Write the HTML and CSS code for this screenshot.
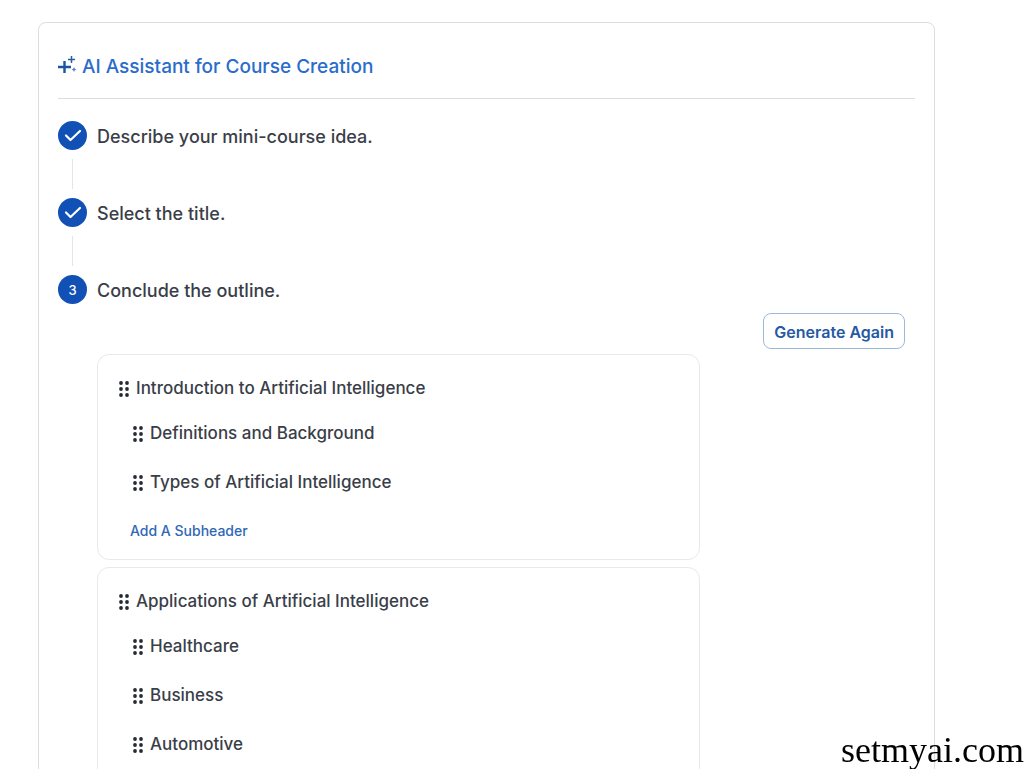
FILE: index.html
```html
<!DOCTYPE html>
<html lang="en">
<head>
<meta charset="utf-8">
<meta name="viewport" content="width=device-width, initial-scale=1">
<title>AI Assistant for Course Creation</title>
<link rel="stylesheet" href="styles.css">
</head>
<body>
<svg class="sprite" aria-hidden="true">
  <symbol id="grip" viewBox="0 0 12 18">
    <circle cx="3" cy="3" r="1.900"/><circle cx="9" cy="3" r="1.900"/>
    <circle cx="3" cy="9" r="1.900"/><circle cx="9" cy="9" r="1.900"/>
    <circle cx="3" cy="15" r="1.900"/><circle cx="9" cy="15" r="1.900"/>
  </symbol>
  <symbol id="check" viewBox="0 0 18 14">
    <path d="M2 6.500 6.500 11 16 2" fill="none" stroke="currentColor" stroke-width="2.2" stroke-linecap="round" stroke-linejoin="round"/>
  </symbol>
</svg>
<main class="page">
  <section class="panel">
    <header class="panel-header">
      <svg class="sparkle" viewBox="0 0 20 20" aria-hidden="true">
        <path d="M6.500 5v12M0 11h13" fill="none" stroke="#17559f" stroke-width="2.400"/>
        <path d="M13.500 0v7M10 3.500h7" fill="none" stroke="#2b5f94" stroke-width="1.500"/>
        <path d="M16 11l.8 1.700 1.700.8-1.700.8-.8 1.700-.8-1.700-1.700-.8 1.700-.8z" fill="#4a83c9"/>
      </svg>
      <h1 class="panel-title">AI Assistant for Course Creation</h1>
    </header>
    <ol class="steps">
      <li class="step">
        <div class="rail"><span class="marker"><svg class="check"><use href="#check"/></svg></span><span class="connector"></span></div>
        <h2 class="step-title">Describe your mini-course idea.</h2>
      </li>
      <li class="step">
        <div class="rail"><span class="marker"><svg class="check"><use href="#check"/></svg></span><span class="connector"></span></div>
        <h2 class="step-title">Select the title.</h2>
      </li>
      <li class="step">
        <div class="rail"><span class="marker">3</span></div>
        <div class="step-body">
          <h2 class="step-title">Conclude the outline.</h2>
          <div class="actions"><button class="generate" type="button">Generate Again</button></div>
          <div class="outline">
            <article class="group">
              <h3 class="row"><svg class="grip"><use href="#grip"/></svg>Introduction to Artificial Intelligence</h3>
              <ul class="topics">
                <li class="row"><svg class="grip"><use href="#grip"/></svg>Definitions and Background</li>
                <li class="row"><svg class="grip"><use href="#grip"/></svg>Types of Artificial Intelligence</li>
              </ul>
              <button class="add" type="button">Add A Subheader</button>
            </article>
            <article class="group">
              <h3 class="row"><svg class="grip"><use href="#grip"/></svg>Applications of Artificial Intelligence</h3>
              <ul class="topics">
                <li class="row"><svg class="grip"><use href="#grip"/></svg>Healthcare</li>
                <li class="row"><svg class="grip"><use href="#grip"/></svg>Business</li>
                <li class="row"><svg class="grip"><use href="#grip"/></svg>Automotive</li>
              </ul>
            </article>
          </div>
        </div>
      </li>
    </ol>
  </section>
</main>
<div class="watermark">setmyai.com</div>
</body>
</html>
```
FILE: styles.css
```css
* { box-sizing: border-box; }
body {
  margin: 0;
  background: #fff;
  color: #3a3e48;
  font-family: Inter, "Liberation Sans", sans-serif;
  font-weight: 500;
}
.sprite { position: absolute; width: 0; height: 0; }
.page { height: 100vh; overflow: hidden; padding: 22px 89px 0 38px; }
.panel { border: 1px solid #dcdde0; border-radius: 8px; padding: 20px 19px; }
.panel-header {
  display: flex;
  align-items: center;
  gap: 4px;
  height: 56px;
  padding-bottom: 7px;
  border-bottom: 1px solid #dcdde0;
}
.sparkle { width: 20px; height: 20px; margin-bottom: 2px; }
.panel-title { margin: 0; font-size: 19px; line-height: 28px; font-weight: 500; color: #2a6ccb; }
.steps { list-style: none; margin: 0; padding: 22px 0 0; }
.step { display: grid; grid-template-columns: 29px 1fr; column-gap: 10px; min-height: 77px; }
.rail { display: flex; flex-direction: column; align-items: center; gap: 9px; padding-bottom: 9px; }
.marker {
  display: flex;
  align-items: center;
  justify-content: center;
  width: 29px;
  height: 29px;
  border-radius: 50%;
  background: #1150b4;
  color: #fff;
  font-size: 13px;
}
.check { width: 18px; height: 14px; }
.connector { flex: 1; width: 1px; background: #e4e5e9; }
.step-title { margin: 0; font-size: 18px; line-height: 32px; font-weight: 500; }
.actions { display: flex; justify-content: flex-end; padding: 6px 10px 5px 0; }
.generate {
  height: 36px;
  padding: 2px 10px 0;
  border: 1px solid #9db9d8;
  border-radius: 8px;
  background: #fff;
  color: #2459a3;
  font: 600 16px/20px Inter, sans-serif;
}
.outline { display: flex; flex-direction: column; gap: 7px; max-width: 603px; }
.group { border: 1px solid #e8e9eb; border-radius: 12px; padding: 21px 20px 18px; }
.group:last-child { padding-bottom: 65px; }
.row {
  display: flex;
  align-items: center;
  gap: 6px;
  margin: 0;
  font-size: 17px;
  line-height: 24px;
  font-weight: 500;
}
.grip { width: 12px; height: 18px; margin-top: 2px; fill: #262a33; }
.topics { list-style: none; margin: 0; padding: 21px 0 0 14px; display: flex; flex-direction: column; gap: 25px; }
.add {
  margin: 27px 0 0 12px;
  padding: 0;
  border: 0;
  background: none;
  color: #2f68b5;
  font: 500 14px/20px Inter, sans-serif;
}
.watermark {
  position: fixed;
  right: 0;
  bottom: 0;
  color: #000;
  font: 36px/38px "Liberation Serif", serif;
}
```
